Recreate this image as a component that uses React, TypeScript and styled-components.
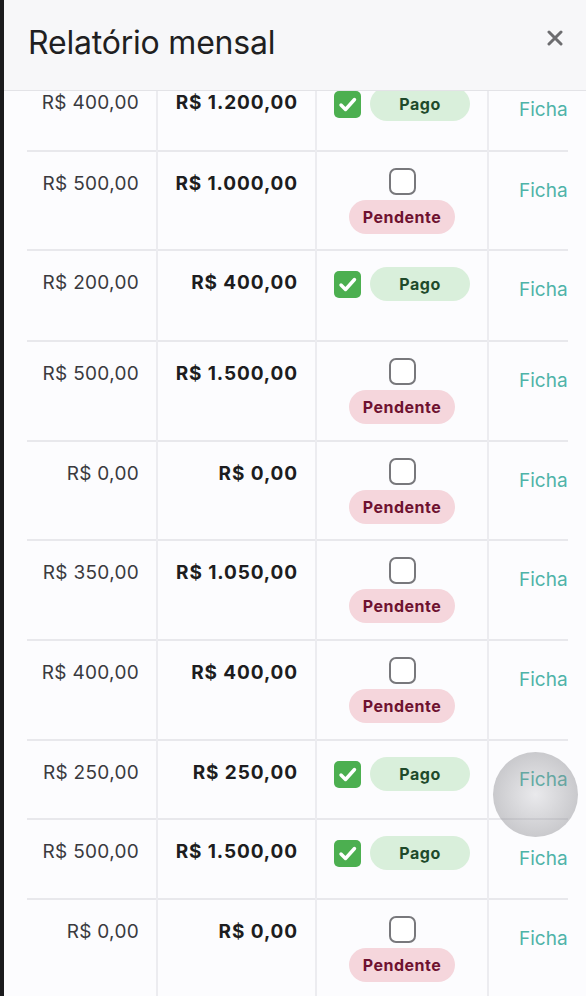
import React from 'react';
import styled, { createGlobalStyle } from 'styled-components';

interface Parcela {
  valor: string;
  total: string;
  pago: boolean;
  altura: number;
}

const parcelas: Parcela[] = [
  { valor: 'R$ 400,00', total: 'R$ 1.200,00', pago: true, altura: 80 },
  { valor: 'R$ 500,00', total: 'R$ 1.000,00', pago: false, altura: 99 },
  { valor: 'R$ 200,00', total: 'R$ 400,00', pago: true, altura: 91 },
  { valor: 'R$ 500,00', total: 'R$ 1.500,00', pago: false, altura: 100 },
  { valor: 'R$ 0,00', total: 'R$ 0,00', pago: false, altura: 99 },
  { valor: 'R$ 350,00', total: 'R$ 1.050,00', pago: false, altura: 100 },
  { valor: 'R$ 400,00', total: 'R$ 400,00', pago: false, altura: 100 },
  { valor: 'R$ 250,00', total: 'R$ 250,00', pago: true, altura: 79 },
  { valor: 'R$ 500,00', total: 'R$ 1.500,00', pago: true, altura: 80 },
  { valor: 'R$ 0,00', total: 'R$ 0,00', pago: false, altura: 100 },
];

const CloseIcon = () => (
  <svg width="16" height="16" viewBox="0 0 16 16">
    <path d="M2 2L14 14M14 2L2 14" stroke="#6d6d70" strokeWidth="3" strokeLinecap="round" />
  </svg>
);

const CheckMark = () => (
  <svg width="27" height="27" viewBox="0 0 27 27">
    <path d="M7 14l4.5 4.5L20.5 8.5" fill="none" stroke="#fff" strokeWidth="3.4" strokeLinecap="round" strokeLinejoin="round" />
  </svg>
);

const App: React.FC = () => {
  return (
    <>
      <GlobalStyle />
      <Screen>
        <Modal>
          <Header>
            <Title>Relatório mensal</Title>
            <CloseButton aria-label="Fechar">
              <CloseIcon />
            </CloseButton>
          </Header>
          <Body>
            <Table>
              <colgroup>
                <col style={{ width: 130 }} />
                <col style={{ width: 159 }} />
                <col style={{ width: 172 }} />
                <col style={{ width: 80 }} />
              </colgroup>
              <tbody>
                {parcelas.map((p, i) => (
                  <Row key={i} $h={p.altura}>
                    <Amount>{p.valor}</Amount>
                    <Amount $bold>{p.total}</Amount>
                    <StatusCell>
                      <StatusWrap>
                        <Checkbox $checked={p.pago}>{p.pago && <CheckMark />}</Checkbox>
                        <Pill $pago={p.pago}>{p.pago ? 'Pago' : 'Pendente'}</Pill>
                      </StatusWrap>
                    </StatusCell>
                    <LinkCell>
                      <FichaLink>Ficha</FichaLink>
                    </LinkCell>
                  </Row>
                ))}
              </tbody>
            </Table>
          </Body>
          <TouchDot />
        </Modal>
      </Screen>
    </>
  );
};

export default App;

// Styled-components
const GlobalStyle = createGlobalStyle`
  html, body {
    margin: 0;
    padding: 0;
    background: #1b1b1d;
    font-family: Inter, "Noto Sans", sans-serif;
  }
`;

const Screen = styled.div`
  display: flex;
  height: 996px;
  padding-left: 4px;
  overflow: hidden;
`;

const Modal = styled.div`
  position: relative;
  flex: 1;
  display: flex;
  flex-direction: column;
  background: #fcfcfe;
  overflow: hidden;
`;

const Header = styled.div`
  height: 91px;
  flex-shrink: 0;
  display: flex;
  align-items: center;
  justify-content: space-between;
  padding: 0 23px 5px 24px;
  box-sizing: border-box;
  background: #f7f7f9;
  border-bottom: 1px solid #e3e3e7;
  position: relative;
  z-index: 1;
`;

const Title = styled.h1`
  margin: 0;
  font-size: 32px;
  font-weight: 400;
  color: #1f1f22;
  letter-spacing: -0.2px;
`;

const CloseButton = styled.button`
  align-self: flex-start;
  margin-top: 30px;
  padding: 0;
  border: none;
  background: none;
  display: flex;
  cursor: pointer;
`;

const Body = styled.div`
  flex: 1;
  overflow: hidden;
`;

const Table = styled.table`
  margin: -20px 0 0 23px;
  width: 541px;
  table-layout: fixed;
  border-collapse: collapse;
`;

const Row = styled.tr<{ $h: number }>`
  height: ${({ $h }) => $h}px;
  border-bottom: 2px solid #e8e8ec;
`;

const Cell = styled.td`
  vertical-align: top;
  padding: 0;
  border-left: 2px solid #ececf0;

  &:first-child {
    border-left: none;
  }
`;

const Amount = styled(Cell)<{ $bold?: boolean }>`
  padding: 22px 17px 0 0;
  text-align: right;
  font-size: 19px;
  line-height: 19px;
  font-weight: ${({ $bold }) => ($bold ? 700 : 400)};
  letter-spacing: ${({ $bold }) => ($bold ? '0.9px' : '0.3px')};
  color: ${({ $bold }) => ($bold ? '#1d1d20' : '#3a3a3e')};
  white-space: nowrap;
`;

const StatusCell = styled(Cell)`
  padding: 16px 16px 0;
`;

const StatusWrap = styled.div`
  display: flex;
  flex-wrap: wrap;
  justify-content: center;
  align-items: center;
  column-gap: 9px;
  row-gap: 5px;
`;

const Checkbox = styled.span<{ $checked: boolean }>`
  width: 27px;
  height: 27px;
  box-sizing: border-box;
  border-radius: ${({ $checked }) => ($checked ? '5px' : '7px')};
  background: ${({ $checked }) => ($checked ? '#4caf50' : '#fff')};
  border: ${({ $checked }) => ($checked ? 'none' : '2.5px solid #78787c')};
  display: flex;
  align-items: center;
  justify-content: center;
`;

const Pill = styled.span<{ $pago: boolean }>`
  height: 34px;
  min-width: 100px;
  box-sizing: border-box;
  padding: 0 14px;
  border-radius: 17px;
  display: inline-flex;
  align-items: center;
  justify-content: center;
  font-size: 16px;
  font-weight: 700;
  letter-spacing: 0.5px;
  background: ${({ $pago }) => ($pago ? '#d9efdb' : '#f5d6dc')};
  color: ${({ $pago }) => ($pago ? '#1f4a2b' : '#6e1230')};
`;

const LinkCell = styled(Cell)`
  padding: 29px 0 0 30px;
  white-space: nowrap;
  line-height: 19px;
`;

const FichaLink = styled.a`
  font-size: 19px;
  line-height: 19px;
  color: #4fb3a8;
  cursor: pointer;
`;

const TouchDot = styled.div`
  position: absolute;
  left: 489px;
  top: 752px;
  width: 85px;
  height: 85px;
  border-radius: 50%;
  background: radial-gradient(circle, rgba(160, 160, 165, 0.2) 0%, rgba(140, 140, 145, 0.45) 70%, rgba(125, 125, 130, 0.6) 100%);
  pointer-events: none;
`;
